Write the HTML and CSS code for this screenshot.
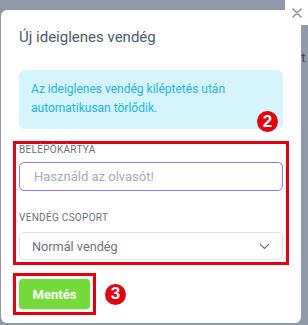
FILE: index.html
```html
<!DOCTYPE html>
<html lang="hu">
  <head>
    <meta charset="UTF-8" />
    <meta name="viewport" content="width=device-width, initial-scale=1.0" />
    <title>Új ideiglenes vendég</title>
    <link rel="stylesheet" href="styles.css">
  </head>
  <body>
    <div class="hatter">
      <span class="hatterSzoveg">lt</span>
    </div>

    <button class="bezar" aria-label="Bezár">
      <svg width="10" height="10" viewBox="0 0 10 10">
        <path d="M1 1 L9 9 M9 1 L1 9" stroke="#8a94a3" stroke-width="1.6" stroke-linecap="round" />
      </svg>
    </button>

    <section class="modal">
      <h2 class="modalCim">Új ideiglenes vendég</h2>

      <div class="info">
        Az ideiglenes vendég kiléptetés után automatikusan törlődik.
      </div>

      <div class="jelolt mezok">
        <span class="szam szam2">2</span>
        <label class="cimke" for="kartya">Belépőkártya</label>
        <input id="kartya" class="mezo fokusz" type="text" placeholder="Használd az olvasót!" />

        <label class="cimke" for="csoport">Vendég csoport</label>
        <div class="valaszto">
          <span>Normál vendég</span>
          <svg width="11" height="7" viewBox="0 0 11 7">
            <path d="M1 1 L5.5 5.5 L10 1" fill="none" stroke="#6b7280" stroke-width="1.2" />
          </svg>
        </div>
      </div>

      <div class="gombSor">
        <div class="jelolt gombKeret">
          <button class="mentes">Mentés</button>
        </div>
        <span class="szam">3</span>
      </div>
    </section>
  </body>
</html>
```

FILE: styles.css
```css
body {
  margin: 0;
  padding: 0;
  width: 308px;
  height: 325px;
  overflow: hidden;
  position: relative;
  font-family: Roboto, "Noto Sans", sans-serif;
  background: #8f99a7;
}

.hatter {
  position: absolute;
  inset: 0;
}
.hatterSzoveg {
  position: absolute;
  left: 298px;
  top: 50px;
  font-size: 13px;
  color: #3d4654;
}

.bezar {
  position: absolute;
  top: 0;
  right: 0;
  width: 23px;
  height: 25px;
  border: none;
  border-radius: 0 0 0 6px;
  background: white;
  display: flex;
  align-items: center;
  justify-content: center;
  padding: 0;
  z-index: 2;
}

.modal {
  position: absolute;
  left: 1px;
  top: 10px;
  width: 300px;
  height: 313px;
  background: white;
  border-radius: 6px;
  box-sizing: border-box;
  padding: 0 18px 0 18px;
}

.modalCim {
  margin: 0;
  padding-top: 19px;
  height: 41px;
  line-height: 17px;
  font-size: 15px;
  font-weight: 400;
  color: #4b5a6c;
}

.info {
  background: #d5f4fb;
  color: #22b5dd;
  border-radius: 6px;
  font-size: 12px;
  line-height: 19px;
  padding: 10px 14px 11px 12px;
}

.jelolt {
  border: 3px solid #e3000f;
  position: relative;
}

.mezok {
  margin: 12px -6px 0 -6px;
  padding: 0 3px 2px 3px;
  display: flex;
  flex-direction: column;
}

.szam {
  width: 21px;
  height: 21px;
  border-radius: 50%;
  background: #e3000f;
  color: white;
  font-family: "Liberation Sans", Arial, sans-serif;
  font-weight: 700;
  font-size: 17px;
  display: flex;
  align-items: center;
  justify-content: center;
}
.szam2 {
  position: absolute;
  right: 8px;
  top: -33px;
}

.cimke {
  font-size: 10px;
  line-height: 12px;
  text-transform: uppercase;
  color: #6b7280;
  letter-spacing: 0.3px;
  margin-bottom: 6px;
}

.mezo {
  height: 29px;
  box-sizing: border-box;
  border-radius: 5px;
  border: 1px solid #dde2e8;
  padding: 0 14px;
  font-family: inherit;
  font-size: 13px;
  margin-bottom: 21px;
  outline: none;
}
.fokusz {
  border-color: #7d7ef5;
}
.mezo::placeholder {
  color: #a4adba;
}

.valaszto {
  height: 28px;
  margin-top: 2px;
  box-sizing: border-box;
  border-radius: 5px;
  border: 1px solid #dde2e8;
  padding: 0 12px 0 12px;
  font-size: 12.7px;
  color: #6b7280;
  display: flex;
  align-items: center;
  justify-content: space-between;
}

.gombSor {
  display: flex;
  align-items: center;
  gap: 9px;
  margin: 8px 0 0 -6px;
}

.gombKeret {
  padding: 3px;
}

.mentes {
  width: 71px;
  height: 30px;
  border: none;
  border-radius: 4px;
  background: #74db3a;
  color: white;
  font-family: inherit;
  font-weight: 700;
  font-size: 13px;
  box-shadow: 0 1px 2px rgba(0, 0, 0, 0.15);
  display: block;
}
```
